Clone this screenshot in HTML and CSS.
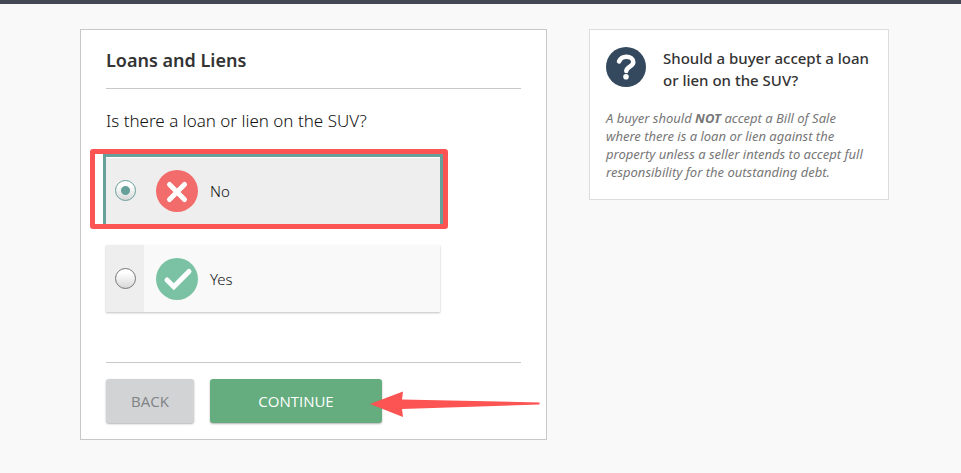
FILE: index.html
```html
<!DOCTYPE html>
<html lang="en">
<head>
<meta charset="utf-8">
<title>Loans and Liens</title>
<link rel="stylesheet" href="styles.css">
</head>
<body>
<main class="page">
  <form class="card">
    <h1 class="card-title">Loans and Liens</h1>
    <fieldset class="question">
      <legend class="question-text">Is there a loan or lien on the SUV?</legend>
      <div class="options">
        <label class="option option-selected">
          <span class="option-control"><input class="radio" type="radio" name="lien" value="no" checked></span>
          <svg class="option-icon" viewBox="0 0 42 42" aria-hidden="true">
            <circle cx="21" cy="21" r="21" fill="#f26c6c"/>
            <path d="M13.500 14.500 28.500 29.500M28.500 14.500 13.500 29.500" stroke="#fff" stroke-width="5" stroke-linecap="round"/>
          </svg>
          <span>No</span>
          <span class="highlight"></span>
        </label>
        <label class="option">
          <span class="option-control"><input class="radio" type="radio" name="lien" value="yes"></span>
          <svg class="option-icon" viewBox="0 0 42 42" aria-hidden="true">
            <circle cx="21" cy="21" r="21" fill="#7ac2a3"/>
            <path d="M11 22 17.800 28.800 33 13.500" fill="none" stroke="#fff" stroke-width="5" stroke-linecap="round"/>
          </svg>
          <span>Yes</span>
        </label>
      </div>
    </fieldset>
    <div class="actions">
      <button class="button button-back" type="button">BACK</button>
      <button class="button button-continue" type="submit">CONTINUE</button>
      <svg class="arrow" viewBox="0 0 170 26" aria-hidden="true">
        <path d="M0 13 33 0.500 32 8.500 169.500 11.500V13.500L32 18 33 26Z" fill="#fc5353"/>
      </svg>
    </div>
  </form>
  <aside class="help">
    <div class="help-head">
      <svg class="help-icon" viewBox="0 0 40 40" aria-hidden="true">
        <circle cx="20" cy="20" r="20" fill="#34495e"/>
        <path d="M13 14.500C14.500 11 17 9.800 20.300 9.800C24.500 9.800 27.300 12 27.300 15.300C27.300 19.500 20.300 19.700 20.300 24" fill="none" stroke="#fff" stroke-width="4.500" stroke-linecap="round"/>
        <circle cx="20" cy="29.700" r="2.800" fill="#fff"/>
      </svg>
      <h2 class="help-title">Should a buyer accept a loan or lien on the SUV?</h2>
    </div>
    <p class="help-text">A buyer should <strong>NOT</strong> accept a Bill of Sale where there is a loan or lien against the property unless a seller intends to accept full responsibility for the outstanding debt.</p>
  </aside>
</main>
</body>
</html>
```
FILE: styles.css
```css
* {
  box-sizing: border-box;
}

body {
  margin: 0;
  border-top: 4px solid #444854;
  background: #f9f9f9;
  color: #333;
  font-family: "Noto Sans", sans-serif;
  font-size: 16px;
}

.page {
  display: grid;
  grid-template-columns: 467fr 300fr;
  gap: 42px;
  align-items: start;
  max-width: 961px;
  margin: 0 auto;
  padding: 25px 72px 32px 80px;
}

.card {
  padding: 16px 25px;
  border: 1px solid #c8c8c8;
  background: #fff;
}

.card-title {
  margin: 0;
  padding-bottom: 14px;
  border-bottom: 1px solid #c8c8c8;
  font-size: 18px;
  font-weight: 600;
  line-height: 28px;
}

.question {
  min-width: 0;
  margin: 0;
  padding: 0;
  border: 0;
}

.question-text {
  padding: 20px 0 24px;
  color: #111;
  font-size: 17px;
  font-weight: 300;
  line-height: 24px;
}

.options {
  display: grid;
  gap: 21px;
  max-width: 334px;
}

.option {
  position: relative;
  display: flex;
  align-items: center;
  gap: 12px;
  height: 67px;
  background: #f9f9f9;
  box-shadow: 0 1px 2px rgba(0, 0, 0, 0.25);
  color: #111;
  font-size: 15px;
  font-weight: 300;
}

.option-selected {
  background: #eee;
  box-shadow: inset 0 1px #fff, 0 0 0 3px #66a09b;
}

.option-control {
  display: flex;
  align-items: center;
  align-self: stretch;
  justify-content: center;
  width: 38px;
}

.option:not(.option-selected) .option-control {
  background: #eee;
}

.radio {
  appearance: none;
  width: 21px;
  height: 21px;
  margin: 0;
  border: 1px solid #777;
  border-radius: 50%;
  background: linear-gradient(#fff 20%, #d8d8d8);
}

.radio:checked {
  border-color: #66a09b;
  background: radial-gradient(circle, #66a09b 4px, transparent 5px), linear-gradient(#fff 20%, #d8d8d8);
}

.option-icon {
  width: 42px;
  height: 42px;
}

.highlight {
  position: absolute;
  inset: -8px -8px -5px -16px;
  border: 5px solid #fc5353;
  border-radius: 3px;
  pointer-events: none;
}

.actions {
  position: relative;
  display: flex;
  gap: 16px;
  margin-top: 50px;
  padding-top: 16px;
  border-top: 1px solid #c8c8c8;
}

.button {
  height: 44px;
  padding: 0;
  border: 0;
  border-radius: 3px;
  box-shadow: 0 1px 2px rgba(0, 0, 0, 0.3);
  font-family: "Open Sans", sans-serif;
  font-size: 15px;
}

.button-back {
  width: 88px;
  background: #d1d3d4;
  color: #808285;
}

.button-continue {
  width: 172px;
  background: #65ad7e;
  color: #fff;
}

.arrow {
  position: absolute;
  top: 28px;
  left: 264px;
  width: 170px;
  height: 26px;
}

.help {
  padding: 17px 16px;
  border: 1px solid #ddd;
  background: #fff;
}

.help-head {
  display: flex;
  gap: 17px;
}

.help-icon {
  flex: none;
  width: 40px;
  height: 40px;
}

.help-title {
  margin: 0;
  font-size: 15px;
  font-weight: 500;
  line-height: 22px;
}

.help-text {
  margin: 18px 0 1px;
  color: #777;
  font-size: 13px;
  font-style: italic;
  line-height: 18px;
}
```
